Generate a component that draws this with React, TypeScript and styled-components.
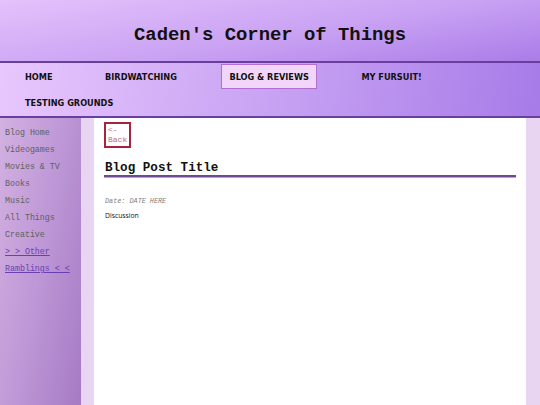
import React from "react";
import styled, { createGlobalStyle } from "styled-components";

const Global = createGlobalStyle`
  html, body { margin: 0; padding: 0; background: #e8d5f1; }
  body { font-family: "DejaVu Sans", sans-serif; }
  * { box-sizing: border-box; }
`;

const Page = styled.div`
  width: 540px;
  min-height: 405px;
  display: flex;
  flex-direction: column;
`;

const Header = styled.header`
  height: 63px;
  flex-shrink: 0;
  background: linear-gradient(170deg, #e4c2fb 0%, #c9a2f3 55%, #a97ce8 100%);
  display: flex;
  align-items: center;
  justify-content: center;
  border-bottom: 2px solid #6a3e9c;
`;

const SiteTitle = styled.h1`
  margin: 0;
  padding-top: 9px;
  font-family: "Liberation Mono", "Courier New", monospace;
  font-weight: bold;
  font-size: 18.9px;
  color: #111;
`;

const Nav = styled.nav`
  height: 55px;
  flex-shrink: 0;
  background: linear-gradient(100deg, #e8c7fd 0%, #c8a3f3 50%, #a77be8 100%);
  border-bottom: 2px solid #6a3e9c;
  display: flex;
  flex-wrap: wrap;
  align-content: flex-start;
  padding: 1px 0 0 17px;
  row-gap: 1px;
  column-gap: 36.5px;
`;

const NavItem = styled.a<{ $active?: boolean }>`
  height: 25px;
  display: flex;
  align-items: center;
  padding: 0 7px;
  font-family: "DejaVu Sans", sans-serif;
  font-weight: bold;
  font-size: 8.2px;
  color: #111;
  text-decoration: none;
  border: 1px solid ${(p) => (p.$active ? "#b26fd0" : "transparent")};
  background: ${(p) => (p.$active ? "#f2d6fa" : "transparent")};
`;

const Body = styled.div`
  flex: 1;
  display: flex;
  min-height: 287px;
`;

const Sidebar = styled.aside`
  width: 81px;
  background: linear-gradient(100deg, #d3b1e1 0%, #bd97d6 50%, #a67ac4 100%);
  padding: 6px 0 0 5px;
  display: flex;
  flex-direction: column;
`;

const SideLink = styled.a<{ $link?: boolean }>`
  font-family: "Liberation Mono", "Courier New", monospace;
  font-size: 8.3px;
  line-height: 17px;
  color: ${(p) => (p.$link ? "#6a3fb0" : "#5f5f5f")};
  text-decoration: ${(p) => (p.$link ? "underline" : "none")};
`;

const Gutter = styled.div`
  width: 13px;
  background: #e8d5f1;
`;

const Content = styled.main`
  width: 432px;
  background: #fff;
  padding: 4px 10px 0 10px;
  display: flex;
  flex-direction: column;
  align-items: flex-start;
`;

const BackButton = styled.button`
  width: 27px;
  height: 26px;
  border: 2px solid #a8233f;
  background: #fff;
  padding: 1px 2px;
  text-align: left;
  font-family: "Liberation Mono", "Courier New", monospace;
  font-size: 8px;
  line-height: 10px;
  color: #c46a7a;
  cursor: pointer;
`;

const PostTitle = styled.h2`
  margin: 12px 0 0 0;
  width: 412px;
  font-family: "Liberation Mono", "Courier New", monospace;
  font-weight: bold;
  font-size: 12.6px;
  line-height: 12px;
  color: #111;
  padding: 2px 0 1px 1px;
  border-bottom: 2px solid #6b4a92;
  box-shadow: 0 1px 0 #b9a3d0;
`;

const DateLine = styled.div`
  margin-top: 20px;
  font-family: "Liberation Mono", "Courier New", monospace;
  font-style: italic;
  font-size: 6.8px;
  color: #808080;
  padding-left: 1px;
`;

const Discussion = styled.p`
  margin: 6px 0 0 1px;
  font-family: "Open Sans", sans-serif;
  font-size: 6.8px;
  color: #111;
`;

const navItems = ["HOME", "BIRDWATCHING", "BLOG & REVIEWS", "MY FURSUIT!", "TESTING GROUNDS"];
const sideItems = ["Blog Home", "Videogames", "Movies & TV", "Books", "Music", "All Things", "Creative"];

export default function App() {
  return (
    <Page>
      <Global />
      <Header>
        <SiteTitle>Caden's Corner of Things</SiteTitle>
      </Header>
      <Nav>
        {navItems.map((n) => (
          <NavItem key={n} $active={n === "BLOG & REVIEWS"}>
            {n}
          </NavItem>
        ))}
      </Nav>
      <Body>
        <Sidebar>
          {sideItems.map((s) => (
            <SideLink key={s}>{s}</SideLink>
          ))}
          <SideLink $link>&gt; &gt; Other</SideLink>
          <SideLink $link>Ramblings &lt; &lt;</SideLink>
        </Sidebar>
        <Gutter />
        <Content>
          <BackButton>
            &lt;-
            <br />
            Back
          </BackButton>
          <PostTitle>Blog Post Title</PostTitle>
          <DateLine>Date: DATE HERE</DateLine>
          <Discussion>Discussion</Discussion>
        </Content>
        <Gutter />
      </Body>
    </Page>
  );
}
